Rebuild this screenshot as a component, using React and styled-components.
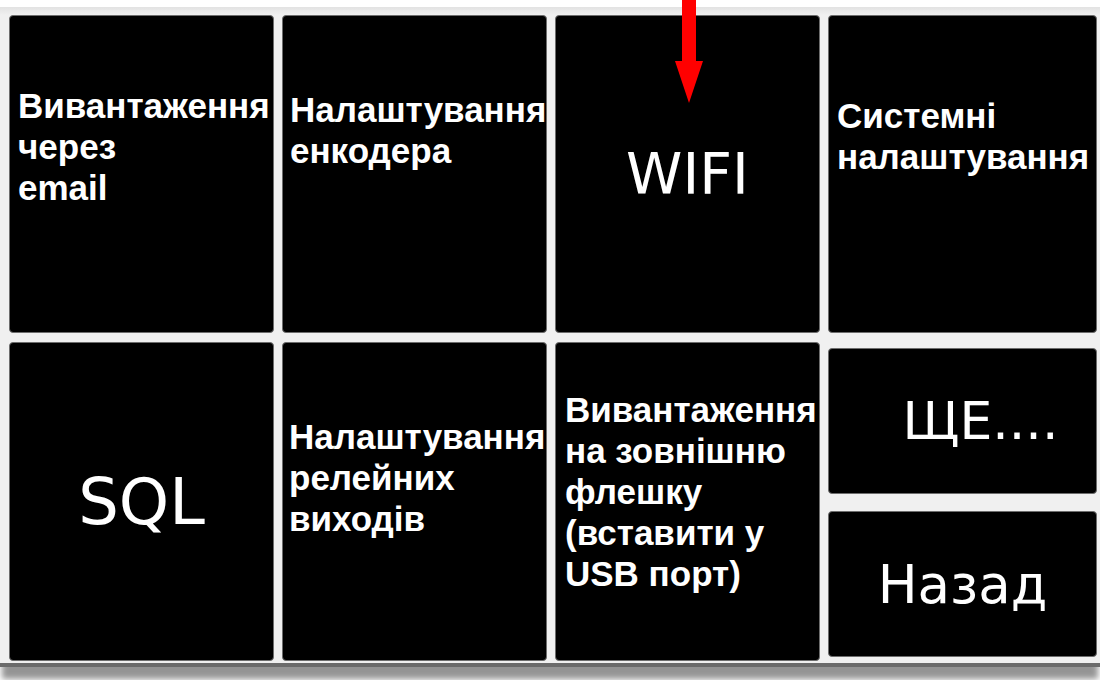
import React from "react";
import styled, { createGlobalStyle } from "styled-components";

const GlobalStyle = createGlobalStyle`
  html, body {
    margin: 0;
    padding: 0;
    background: #ffffff;
  }
`;

const Page = styled.div`
  position: relative;
  width: 1100px;
  height: 680px;
  padding-top: 7px;
  box-sizing: border-box;
  overflow: hidden;
  background: #ffffff;
`;

const Panel = styled.div`
  background: linear-gradient(#e2e2e2, #f0f0f0 8px);
  padding: 8px 3px 2px 9px;
  border-bottom: 4px solid #6b6b6b;
  box-shadow: 0 14px 6px -2px rgba(0, 0, 0, 0.42);
`;

const MenuGrid = styled.div`
  display: grid;
  grid-template-columns: 265px 265px 265px 269px;
  grid-template-rows: 318px 319px;
  column-gap: 8px;
  row-gap: 9px;
`;

const Tile = styled.div`
  box-sizing: border-box;
  display: flex;
  background: #000000;
  color: #ffffff;
  border: 1px solid #6d6d6d;
  border-radius: 4px;
  overflow: hidden;
`;

// Bold multi-line label, placed from the top-left like the device's own labels
const TextTile = styled(Tile)`
  flex-direction: column;
  padding: ${(p) => p.$top}px 0 0 ${(p) => p.$left ?? 8}px;
  font-family: "Liberation Sans", Arial, sans-serif;
  font-weight: bold;
  font-size: 35px;
  line-height: 41px;
  white-space: nowrap;
`;

// Big single word centred in the tile
const WordTile = styled(Tile)`
  flex: 1;
  align-items: center;
  justify-content: center;
  padding-left: ${(p) => p.$shift ?? 0}px;
  font-family: "DejaVu Sans", Verdana, sans-serif;
  font-size: ${(p) => p.$size}px;
`;

const SideStack = styled.div`
  display: flex;
  flex-direction: column;
  gap: 17px;
  padding: 6px 0 4px;
`;

const Arrow = styled.svg`
  position: absolute;
  left: 675px;
  top: 0;
`;

const Label = ({ lines, ...rest }) => (
  <TextTile {...rest}>
    {lines.map((line) => (
      <span key={line}>{line}</span>
    ))}
  </TextTile>
);

export default function App() {
  return (
    <Page>
      <GlobalStyle />
      <Panel>
        <MenuGrid>
          <Label $top={69} lines={["Вивантаження", "через", "email"]} />
          <Label $top={73} $left={7} lines={["Налаштування", "енкодера"]} />
          <WordTile $size={57}>WIFI</WordTile>
          <Label $top={79} lines={["Системні", "налаштування"]} />

          <WordTile $size={64}>SQL</WordTile>
          <Label
            $top={73}
            $left={6}
            lines={["Налаштування", "релейних", "виходів"]}
          />
          <Label
            $top={46}
            $left={9}
            lines={[
              "Вивантаження",
              "на зовнішню",
              "флешку",
              "(вставити у",
              "USB порт)",
            ]}
          />
          <SideStack>
            <WordTile $size={52} $shift={36}>
              ЩЕ....
            </WordTile>
            <WordTile $size={53}>Назад</WordTile>
          </SideStack>
        </MenuGrid>
      </Panel>

      <Arrow width="28" height="103" viewBox="0 0 28 103">
        <rect x="7" y="0" width="14" height="62" fill="#ff0000" />
        <polygon points="0,61 28,61 14,103" fill="#ff0000" />
      </Arrow>
    </Page>
  );
}
